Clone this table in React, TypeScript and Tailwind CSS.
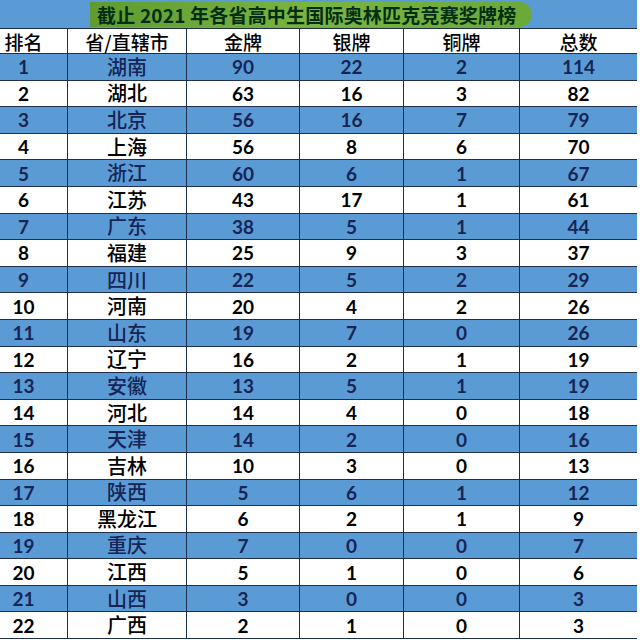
const rows: [string, string, number, number, number, number][] = [
  ["1", "湖南", 90, 22, 2, 114],
  ["2", "湖北", 63, 16, 3, 82],
  ["3", "北京", 56, 16, 7, 79],
  ["4", "上海", 56, 8, 6, 70],
  ["5", "浙江", 60, 6, 1, 67],
  ["6", "江苏", 43, 17, 1, 61],
  ["7", "广东", 38, 5, 1, 44],
  ["8", "福建", 25, 9, 3, 37],
  ["9", "四川", 22, 5, 2, 29],
  ["10", "河南", 20, 4, 2, 26],
  ["11", "山东", 19, 7, 0, 26],
  ["12", "辽宁", 16, 2, 1, 19],
  ["13", "安徽", 13, 5, 1, 19],
  ["14", "河北", 14, 4, 0, 18],
  ["15", "天津", 14, 2, 0, 16],
  ["16", "吉林", 10, 3, 0, 13],
  ["17", "陕西", 5, 6, 1, 12],
  ["18", "黑龙江", 6, 2, 1, 9],
  ["19", "重庆", 7, 0, 0, 7],
  ["20", "江西", 5, 1, 0, 6],
  ["21", "山西", 3, 0, 0, 3],
  ["22", "广西", 2, 1, 0, 3],
];

const cjk = "font-['Noto_Sans_CJK_SC',sans-serif] font-medium";
const num = "font-['Lato','Noto_Sans_CJK_SC',sans-serif] font-bold";

const cols = "grid grid-cols-[68px_119px_113px_104px_116px_117px]";

function Cell(props: { children: React.ReactNode; className?: string; last?: boolean }) {
  return (
    <div
      className={
        "flex items-center justify-center leading-none " +
        (props.last ? "" : "border-r border-[#1f2f4f] ") +
        (props.className ?? "")
      }
    >
      {props.children}
    </div>
  );
}

export default function App() {
  return (
    <div className="w-[640px] h-[640px] overflow-hidden bg-white">
      <div className="w-[637px]">
        {/* title */}
        <div className="h-[28px] bg-[#5b9bd5] flex items-center pl-[90px]">
          <div className="h-[25px] w-[442px] rounded-r-[14px] bg-gradient-to-r from-[#5e9c31] via-[#7ab540] to-[#6aa838] flex items-center pl-[7px] text-[19px] font-bold text-green-950 leading-none whitespace-nowrap tracking-[0.2px] font-['Noto_Sans_CJK_SC',sans-serif]">
            截止 2021 年各省高中生国际奥林匹克竞赛奖牌榜
          </div>
        </div>
        {/* header */}
        <div className={cols + " h-[26px] bg-white border-y border-[#1f2f4f] text-[19px] text-black " + cjk}>
          <Cell className="pr-[20px]">排名</Cell>
          <Cell>省/直辖市</Cell>
          <Cell>金牌</Cell>
          <Cell>银牌</Cell>
          <Cell>铜牌</Cell>
          <Cell last>总数</Cell>
        </div>
        {rows.map((r, i) => {
          const blue = i % 2 === 0;
          return (
            <div
              key={r[0]}
              className={
                cols +
                " h-[26.6px] border-b border-[#1f2f4f] " +
                (blue ? "bg-[#5b9bd5] text-blue-950" : "bg-white text-black")
              }
            >
              <Cell className={"pr-[20px] text-[19px] " + num}>{r[0]}</Cell>
              <Cell className={"text-[20px] " + cjk}>{r[1]}</Cell>
              <Cell className={"text-[19px] " + num}>{r[2]}</Cell>
              <Cell className={"text-[19px] " + num}>{r[3]}</Cell>
              <Cell className={"text-[19px] " + num}>{r[4]}</Cell>
              <Cell last className={"text-[19px] " + num}>
                {r[5]}
              </Cell>
            </div>
          );
        })}
      </div>
    </div>
  );
}
